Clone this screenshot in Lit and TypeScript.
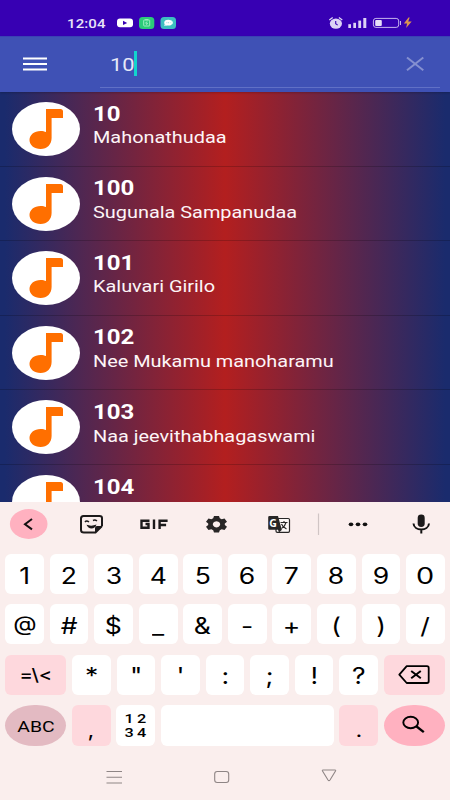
import { LitElement, html, css, svg } from "lit";
import { customElement } from "lit/decorators.js";
import { classMap } from "lit/directives/class-map.js";

const songs = [
  ["10", "Mahonathudaa"],
  ["100", "Sugunala Sampanudaa"],
  ["101", "Kaluvari Girilo"],
  ["102", "Nee Mukamu manoharamu"],
  ["103", "Naa jeevithabhagaswami"],
  ["104", ""],
];

@customElement("status-bar")
class StatusBar extends LitElement {
  static styles = css`
    :host { display: flex; align-items: center; height: 36px; box-sizing: border-box; padding: 10px 0 0 67px; background: #3700b3; color: #e9e3f8; }
    .time { width: 50px; font: 500 13.500px/20px Roboto, sans-serif; }
    .time span { display: inline-block; transform: scaleX(1.11); transform-origin: 0 50%; letter-spacing: 0.1px; }
    .left { width: 60px; height: 14px; }
    .right { margin-left: 151px; width: 86px; height: 14px; }
    svg { display: block; }
  `;
  render() {
    return html`
      <div class="time"><span>12:04</span></div>
      <svg class="left" viewBox="117 16 60 14">
        <rect x="117" y="18.5" width="16" height="8.8" rx="3" fill="#fff" />
        <path d="M123 20.7v4.4l4.2-2.2z" fill="#3700b3" />
        <rect x="139" y="17" width="15.3" height="12" rx="3.5" fill="#2bcb79" />
        <g fill="none" stroke="#a9f0cb" stroke-width=".9"><rect x="143.700" y="20" width="6" height="6" rx=".6" /><path d="M145.200 19.700h3M147 21.500l-1.400 1.700h2l-1.200 1.700" /></g>
        <rect x="160.500" y="17" width="15.500" height="12" rx="3.500" fill="#3cbfc0" />
        <ellipse cx="168.200" cy="22.700" rx="4" ry="2.900" fill="#fff" />
        <path d="M165 24l-1 2 3-.8zM171 20.500c2.500 0 2.500 4 .5 4z" fill="#e5fafa" />
        <path d="M166.500 22.700h.8M168.200 22.700h.8M169.900 22.700h.6" stroke="#3cbfc0" stroke-width=".6" />
      </svg>
      <svg class="right" viewBox="328 16 86 14">
        <ellipse cx="335.900" cy="23.600" rx="6.100" ry="5.200" fill="#ddd3f5" />
        <path d="M329.300 20l3.400-2.500M342.300 20l-3.400-2.500" stroke="#ddd3f5" stroke-width="1.300" />
        <path d="M335.700 21v2.800l2 1.300" fill="none" stroke="#3700b3" stroke-width="1.100" />
        <g fill="#ddd3f5"><rect x="348.300" y="24.200" width="2.700" height="3.800" /><rect x="353.300" y="22.800" width="2.700" height="5.200" /><rect x="358.300" y="20.600" width="2.800" height="7.400" /><rect x="363.300" y="18" width="3" height="10" /></g>
        <rect x="373.400" y="18.400" width="25.300" height="9" rx="2.500" fill="none" stroke="#c5b5ee" stroke-width="1" />
        <rect x="375.200" y="20" width="6.600" height="6" rx="1" fill="#e6def8" />
        <path d="M400.500 21v4" stroke="#c5b5ee" />
        <path d="M408.500 17.500l-4.600 6h3.200l-1 4.500 5.600-6.500h-3.500l1.500-4z" fill="#dc944f" />
      </svg>`;
  }
}

@customElement("search-bar")
class SearchBar extends LitElement {
  static styles = css`
    :host { display: flex; height: 56px; background: #3f51b5; position: relative; z-index: 1; box-shadow: 0 1px 2px #0003; border-top: 1px solid #3a42b4; box-sizing: border-box; }
    .menu { width: 100px; height: 55px; }
    .field { width: 340px; height: 51px; box-sizing: border-box; border-bottom: 1px solid #6070c6; display: flex; align-items: center; }
    .query { margin-left: 10px; width: 24px; color: #e6e8f7; font: 19px/24px Roboto, sans-serif; padding-top: 6px; }
    .query span { display: inline-block; transform: scaleX(1.15); transform-origin: 0 50%; }
    .caret { width: 2.500px; height: 25px; background: #12d4cd; margin: 3px 0 0 0; }
    .close { margin-left: auto; width: 34px; height: 50px; }
  `;
  render() {
    return html`
      <svg class="menu" viewBox="0 37 100 55"><path d="M23 58.500h24M23 64h24M23 69.500h24" stroke="#fff" stroke-width="2" /></svg>
      <div class="field">
        <div class="query"><span>10</span></div>
        <div class="caret"></div>
        <svg class="close" viewBox="406 37 34 50"><path d="M407 57.500l16.300 12.800M423.300 57.500L407 70.300" stroke="#8590d0" stroke-width="2" /></svg>
      </div>`;
  }
}

@customElement("song-list")
class SongList extends LitElement {
  static styles = css`
    :host { display: block; height: 410px; overflow: hidden; background: linear-gradient(90deg, #1a2b6d 0%, #1a2b6d 1%, #b31f1f 50%, #1a2b6d 99%); }
    .row { height: 74.600px; box-sizing: border-box; border-bottom: 1px solid #00000030; display: flex; padding-left: 12px; }
    .disc { flex: none; width: 68px; height: 54px; margin-top: 10px; }
    .text { margin-left: 13px; color: #fff; font-family: Roboto, sans-serif; white-space: nowrap; }
    .text div { transform-origin: 0 50%; width: max-content; }
    .num { font-size: 20px; line-height: 24px; font-weight: 700; margin-top: 9.600px; transform: scaleX(1.2); }
    .name { font-size: 16px; line-height: 20px; margin-top: 2.600px; transform: scaleX(1.243); color: #fdf5f7; }
  `;
  render() {
    return songs.map(([n, t]) => html`
      <div class="row">
        <svg class="disc" viewBox="0 0 68 54">
          <ellipse cx="34" cy="27" rx="34" ry="27" fill="#fff" />
          <path d="M34 7h14.500q2.500 0 2.500 2.500V16H39.600v20c0 6.500-4.500 11-11 11-6.400 0-11.100-3.900-11.100-9s4.700-9 11.100-9c2.200 0 4 .4 5.400 1.100z" fill="#ff6f00" />
        </svg>
        <div class="text"><div class="num">${n}</div><div class="name">${t}</div></div>
      </div>`);
  }
}

const backspace = svg`<path d="M8.700 1.200H29q1.700 0 1.700 1.700v13.400q0 1.700-1.700 1.700H8.700L1.300 9.600z" fill="none" stroke="#000" stroke-width="1.800" stroke-linejoin="round"/><path d="M13.200 6l9.600 7.200M22.800 6l-9.600 7.200" stroke="#000" stroke-width="2"/>`;
const magnifier = svg`<ellipse cx="12.700" cy="7.500" rx="7.400" ry="5.700" fill="none" stroke="#000" stroke-width="1.900"/><path d="M18.300 11.300l7.500 5.800" stroke="#000" stroke-width="2.400"/>`;

@customElement("soft-keyboard")
class SoftKeyboard extends LitElement {
  static styles = css`
    :host { display: block; height: 298px; background: #faeeed; color: #000; font-family: Inter, Roboto, sans-serif; }
    .tools { display: block; width: 450px; height: 52px; }
    .tools text { font-family: "Open Sans", sans-serif; }
    .keys { display: flex; flex-direction: column; gap: 10.200px; padding: 0 5px; }
    .line { display: grid; grid-template-columns: repeat(10, 1fr); column-gap: 5.700px; height: 40.100px; }
    .edge { grid-template-columns: 61.300px repeat(7, 1fr) 61.300px; }
    .bottom { grid-template-columns: 61.300px 38.600px 38.600px 1fr 38.600px 61.300px; height: 41px; }
    .key { background: #fff; border-radius: 6px; display: flex; align-items: center; justify-content: center; min-width: 0; }
    .key span { display: block; transform: scaleX(1.18); font-size: 22.500px; line-height: 26px; padding-top: 3px; font-weight: 380; }
    .key.wide span { transform: scaleX(1.28); }
    .pink { background: #fed8dd; }
    .key.word span { font-size: 17px; font-weight: 500; padding: 0; }
    .abc { background: #e3bac2; border-radius: 30px / 21px; }
    .go { background: #ffb1c0; border-radius: 30px / 21px; }
    .key.abc span { font: 15.500px/20px Roboto, sans-serif; transform: scaleX(1.25); padding: 3px 0 0; }
    .key.low span { padding-top: 9px; font-size: 20px; }
    .key.at span { font-size: 20.500px; padding: 0; }
    .key.pad { flex-direction: column; padding-top: 1px; box-sizing: border-box; }
    .key.pad span { font: 500 13px/13px Roboto, sans-serif; letter-spacing: 2.600px; margin-right: -2.600px; padding: 0; height: 13.500px; transform: scaleX(1.250); }
    .nav { display: block; width: 450px; height: 53px; }
    .glyph { width: 32px; height: 20px; }
  `;
  key(label: string, kind = "") {
    return html`<div class=${classMap({ key: true, wide: label === "0", at: label === "@", ...(kind ? Object.fromEntries(kind.split(" ").map((k) => [k, true])) : {}) })}><span>${label}</span></div>`;
  }
  render() {
    return html`
      <svg class="tools" viewBox="0 502 450 52">
        <ellipse cx="28.700" cy="524" rx="18.800" ry="15" fill="#ffb1c0" />
        <path d="M32 519l-7 5.200 7 5.200" fill="none" stroke="#111" stroke-width="2" />
        <g fill="none" stroke="#1c1a1b" stroke-width="2">
          <path d="M102 526v-8q0-2-2.500-2H83.500q-2.500 0-2.500 2.500v11.500q0 2.500 3 2.500h11.500l6.500-6.500" />
          <path d="M85 522q1.500-2 4 0M93 520.500q2-1 4 .5" stroke-width="1.500" />
        </g>
        <path d="M86.500 524.800q5 1.800 10-.3-1.500 4-5 4-3.500-.2-5-3.700zM95 533v-5q0-2 2-2h5.500z" fill="#1c1a1b" />
        <g fill="none" stroke="#1c1a1b" stroke-width="2.400"><path d="M149.500 520.800h-8v7h7v-3.800h-3M154 519.600v9.400M159.600 529v-8.200h8M159.600 525h6.500" /></g>
        <path fill-rule="evenodd" fill="#282626" d="M214 516h5l.8 2.300 1.900.9 2.800-.8 2.500 3.400-2.200 1.700v1.500l2.200 1.800-2.500 3.300-2.800-.8-1.900.9-.8 2.300h-5l-.8-2.300-1.900-.9-2.800.8-2.500-3.300 2.200-1.800v-1.500l-2.200-1.700 2.500-3.400 2.800.8 1.900-.9zM216.500 521.200a3.700 3.100 0 1 0 .01 0z" />
        <rect x="276" y="518.500" width="13.500" height="13.800" rx="1.300" fill="#fdf8f7" stroke="#282626" stroke-width="1.200" />
        <path d="M269.500 516h8.500l3.800 13.800h-12.300q-1.300 0-1.300-1.300v-11.200q0-1.300 1.300-1.300zM278 529.800h4l-3 2.700z" fill="#282626" />
        <text x="269.300" y="527" font-size="10.500" font-weight="700" fill="#fff">G</text>
        <path d="M280.500 522.500h7M284 521v1.500M286 522.500q-1 4-4.500 6M281.500 524q1 2.800 5 5" fill="none" stroke="#282626" stroke-width="1.100" />
        <path d="M318.500 513.500v21.500" stroke="#d0c5c5" stroke-width="1.200" />
        <g fill="#111"><ellipse cx="351" cy="524.300" rx="2.300" ry="1.900" /><ellipse cx="358" cy="524.300" rx="2.300" ry="1.900" /><ellipse cx="365" cy="524.300" rx="2.300" ry="1.900" /></g>
        <rect x="417.700" y="514.500" width="7" height="12.500" rx="3.400" fill="#1c1a1b" />
        <path d="M413.500 523.500c.5 8 15 8 15.500 0M421.300 529.500v4" fill="none" stroke="#111" stroke-width="2" />
      </svg>
      <div class="keys">
        <div class="line">${[..."1234567890"].map((k) => this.key(k))}</div>
        <div class="line">${[..."@#$_&-+()/"].map((k) => this.key(k))}</div>
        <div class="line edge">
          ${this.key("=\\<", "pink word")}${[..."*\"':;!?"].map((k) => this.key(k))}
          <div class="key pink"><svg class="glyph" viewBox="0 0 32 20">${backspace}</svg></div>
        </div>
        <div class="line bottom">
          ${this.key("ABC", "abc")}${this.key(",", "pink low")}
          <div class="key pad"><span>12</span><span>34</span></div>
          <div class="key"></div>
          ${this.key(".", "pink low")}
          <div class="key go"><svg class="glyph" viewBox="0 0 32 20">${magnifier}</svg></div>
        </div>
      </div>
      <svg class="nav" viewBox="0 747 450 53" fill="none" stroke="#8e8585" stroke-width="1.100">
        <path d="M106.500 772.500h15.500M106.500 778.200h15.500M106.500 784h15.500" />
        <rect x="214.700" y="772.500" width="14" height="11" rx="2.500" />
        <path d="M323 771h12q1 0 .5 1l-5.500 9q-1 1.300-2 0l-5.500-9q-.5-1 .5-1z" />
      </svg>`;
  }
}

@customElement("app-root")
class AppRoot extends LitElement {
  static styles = css`
    :host { display: flex; flex-direction: column; width: 450px; height: 800px; overflow: hidden; }
  `;
  render() {
    return html`<status-bar></status-bar><search-bar></search-bar><song-list></song-list><soft-keyboard></soft-keyboard>`;
  }
}
